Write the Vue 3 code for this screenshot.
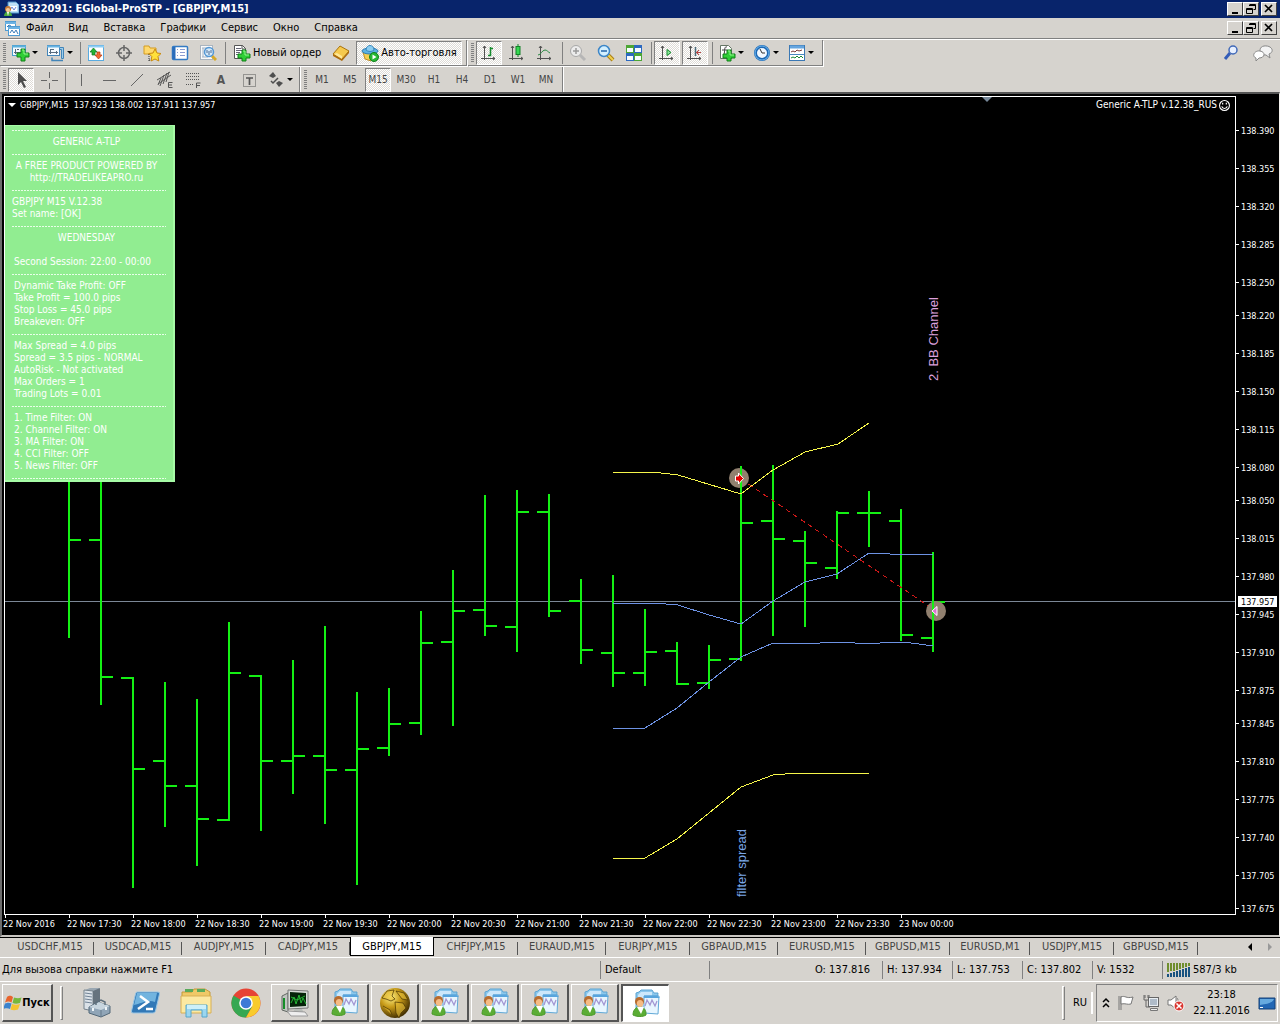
<script setup>
const icons = {
  app: '<path d="M5 1h8l3 3v8H5z" fill="#bfe0f6" stroke="#4a90c8"/><path d="M7 5h7v5H7z" fill="#fff"/><path d="M7 9l2-3 2 3 2-3" fill="none" stroke="#6a8ad8"/><path d="M1 15c0-6 8-6 8 0z" fill="#4aa83c"/><path d="M4 11l1 4 1-4z" fill="#fff"/><circle cx="5" cy="8" r="3" fill="#c87b38"/><circle cx="5" cy="9" r="2" fill="#f6c99a"/>',
  charts: '<rect x="1.500" y="1.500" width="10" height="9" fill="#fff" stroke="#4f9bd2"/><path d="M1 3h11" stroke="#6db2e2" stroke-width="2"/><rect x="4.500" y="6.500" width="11" height="9" fill="#fff" stroke="#4f9bd2"/><path d="M4 8h12" stroke="#6db2e2" stroke-width="2"/><path d="M6 13l2-3 2 3 2-3 2 4" fill="none" stroke="#3a7ab8"/><path d="M3 7l2-2 2 1" fill="none" stroke="#3a7ab8"/>',
  newChart: '<rect x=".5" y="1.500" width="13" height="10" fill="#f4faff" stroke="#4a9ccc"/><path d="M0 2.500h14" stroke="#5cb0dc" stroke-width="2"/><path d="M3.500 5v5M2 8.500h7M5 5.500h2" stroke="#55677a" fill="none"/><path d="M9 5h4v4h4v4h-4v4H9v-4H5V9h4z" fill="#2fce36" stroke="#118018"/><path d="M10 6h2v4h4" fill="none" stroke="#91f58b"/>',
  profiles: '<path d="M4.500 3.500h12v11h-2v-9h-10z" fill="#9ccdec" stroke="#4385b8"/><rect x=".5" y="1.500" width="12" height="10" fill="#f5fbff" stroke="#4385b8"/><path d="M0 2.500h13" stroke="#68b4e4" stroke-width="2"/><path d="M3.500 5v5M2 8.500h9M4 5.500h3M9.500 7v3" stroke="#596d80"/><path d="M5 13.500v3h11" fill="none" stroke="#4385b8" stroke-width="1.500"/>',
  market: '<rect x="1.500" y="1.500" width="15" height="15" fill="#fff" stroke="#5aabe0"/><path d="M1 2.500h16" stroke="#8ecdf4" stroke-width="2"/><path d="M6.500 4L10 8H8v3H5V8H3z" fill="#25b432" stroke="#137522" stroke-width=".7"/><path d="M11.500 15L8 11h2V8h3v3h2z" fill="#f4682f" stroke="#b53a10" stroke-width=".7"/>',
  target: '<circle cx="9" cy="9" r="5.500" fill="none" stroke="#666" stroke-width="1.500"/><path d="M9 1v6M9 11v6M1 9h6M11 9h6" stroke="#666" stroke-width="1.500"/>',
  favorites: '<path d="M1 2h5l1 2h6v6H1z" fill="#ffd96d" stroke="#d49c22"/><path d="M6 10v7M6 16h4" stroke="#333" stroke-dasharray="1 1"/><path d="M12 5l2 4 4 .5-3 3 .8 4.500L12 15l-4 2 .8-4.500-3-3 4.200-.5z" fill="#ffe03b" stroke="#c98a10"/>',
  data: '<rect x="1.500" y="2.500" width="15" height="13" rx="1" fill="#fff" stroke="#337ac4" stroke-width="1.500"/><path d="M3 3v12" stroke="#2a6dbb" stroke-width="3"/><path d="M6 5.500h1M9 5.500h5M6 8.500h1M9 8.500h5M6 11.500h1M9 11.500h5" stroke="#8b9bd0"/>',
  tester: '<rect x="1.500" y="1.500" width="12" height="14" fill="#fafafa" stroke="#aab4bf"/><path d="M3 4h8M3 13h6M4 4v9" stroke="#9fb0c4"/><path d="M13 12l4 4" stroke="#d7a928" stroke-width="3"/><circle cx="10" cy="8" r="4.500" fill="#cbe6fb" fill-opacity=".8" stroke="#5497d4" stroke-width="1.500"/><path d="M8 9V6M10 11V7M12 9V6" stroke="#4b6b96"/>',
  order: '<path d="M1.500 1.500h8l3 3v10h-11z" fill="#fff" stroke="#555"/><path d="M9 1v4h4" fill="none" stroke="#555"/><path d="M3 4.500h5M3 6.500h6M3 8.500h4M3 10.500h2" stroke="#667"/><path d="M9 6h4v4h4v4h-4v3H9v-3H5v-4h4z" fill="#2fce36" stroke="#118018"/><path d="M10 7h2v4h4" fill="none" stroke="#91f58b"/>',
  book: '<path d="M1 10l7-8 9 5-7 8z" fill="#f6c94d" stroke="#a8730e"/><path d="M1 10v2l9 5 7-8V7l-7 8z" fill="#ad6b0b"/><path d="M2 10l3-1 5 3v3z" fill="#ffe796"/>',
  auto: '<path d="M2 8l2 7 6 2 6-7z" fill="#f7cf4e" stroke="#bb8b24"/><ellipse cx="9" cy="7" rx="8" ry="3" fill="#5bb2e2" stroke="#2d7cb4"/><path d="M5 6c0-6 8-6 8 0-2 2-6 2-8 0z" fill="#8bcdf0" stroke="#3888bd"/><circle cx="13" cy="13" r="4.500" fill="#27b834" stroke="#12811f"/><path d="M11.500 10.500v5l4-2.500z" fill="#fff"/>',
  bars: '<path d="M4.500 2v14M1 14.500h14M3 4l1.500-2L6 4M13 13l2 1.500L13 16" fill="none" stroke="#505050"/><path d="M10.500 3v9M8 11.500h3M10 4.500h3" fill="none" stroke="#168a2d" stroke-width="1.500"/>',
  candles: '<path d="M4.500 2v14M1 14.500h14M3 4l1.500-2L6 4M13 13l2 1.500L13 16" fill="none" stroke="#505050"/><path d="M10 0v13" stroke="#168a2d"/><rect x="8" y="2.500" width="4" height="8" fill="#35d851" stroke="#128128"/>',
  line: '<path d="M4.500 2v14M1 14.500h14M3 4l1.500-2L6 4M13 13l2 1.500L13 16" fill="none" stroke="#505050"/><path d="M2 11c3 0 4-5 7-5 2 0 3 2 5 3" fill="none" stroke="#2a8a43"/>',
  zoomIn: '<path d="M11 11l5 5" stroke="#b6b6b6" stroke-width="3"/><circle cx="7" cy="7" r="5.500" fill="#ececec" stroke="#a8a8a8"/><path d="M4 7h6M7 4v6" stroke="#999" stroke-width="1.500"/>',
  zoomOut: '<path d="M11 11l5 5" stroke="#a97f18" stroke-width="4"/><path d="M11 11l5 5" stroke="#f1d04d" stroke-width="2"/><circle cx="7" cy="7" r="5.500" fill="#d2efff" stroke="#3c86c8" stroke-width="1.500"/><path d="M4 7h6" stroke="#2265aa" stroke-width="1.500"/>',
  tiles: '<path d="M1 1h8v8H1z" fill="#4ca635"/><path d="M9 1h8v8H9z" fill="#2c69c0"/><path d="M1 9h8v8H1z" fill="#2c69c0"/><path d="M9 9h8v8H9z" fill="#4ca635"/><path d="M2 4h6v4H2zM10 4h6v4h-6zM2 12h6v4H2zM10 12h6v4h-6z" fill="#f7fcff"/>',
  scroll: '<path d="M4.500 2v14M1 14.500h14M3 4l1.500-2L6 4M13 13l2 1.500L13 16" fill="none" stroke="#505050"/><path d="M9 5.500v6l4-3z" fill="#8be79a" stroke="#148c2e"/>',
  shift: '<path d="M4.500 2v14M1 14.500h14M3 4l1.500-2L6 4M13 13l2 1.500L13 16" fill="none" stroke="#505050"/><path d="M9.500 3v9" stroke="#4b6b7b" stroke-width="1.500"/><path d="M10 8.500h5M13 6l-2.500 2.500L13 11" stroke="#b84444" fill="none"/>',
  indicators: '<path d="M2.500 1.500h8l3 3v10h-11z" fill="#fff" stroke="#657565"/><path d="M9 3c-3-1-2 3-3 9M4 6h5" stroke="#444" fill="none"/><path d="M9 6h4v4h4v4h-4v3H9v-3H5v-4h4z" fill="#2fce36" stroke="#118018"/><path d="M10 7h2v4h4" fill="none" stroke="#91f58b"/>',
  clock: '<circle cx="9" cy="9" r="6.500" fill="#f2f8ff" stroke="#1e69b5" stroke-width="3"/><circle cx="9" cy="9" r="7" fill="none" stroke="#6cb5ef"/><path d="M7 5l2 4h3" fill="none" stroke="#333"/>',
  template: '<rect x="1.500" y="1.500" width="15" height="15" fill="#fff" stroke="#3b78b4"/><path d="M2 3h14" stroke="#65a5df" stroke-width="3"/><path d="M2 10.500h14" stroke="#4787c0"/><path d="M3 8l2-1 2 1 2-2 2 1 3-1" fill="none" stroke="#7b3b38"/><path d="M3 14l2-1 2 1 2-2 2 2 2-2 2 2" fill="none" stroke="#198c35"/>',
  cursor: '<path d="M6 1v13l3-3 3 6 2-1-3-6h4z" fill="#4c4c4c"/>',
  cross: '<path d="M9.500 1v6M9.500 12v6M1 9.500h6M12 9.500h6" stroke="#666"/>',
  vline: '<path d="M9.500 3v12" stroke="#666"/>',
  hline: '<path d="M3 9.500h13" stroke="#666"/>',
  trend: '<path d="M3 15L15 3" stroke="#666"/>',
  channel: '<path d="M2 13L15 4M1 9L14 1M4 15l4-11M7 13l4-11M10 11l3-10M2 14l3-7" stroke="#555" fill="none"/><path d="M16.500 11.500h-4v5h4M12 14h4" stroke="#555" fill="none"/>',
  fibo: '<path d="M2 2.500h14M2 5.500h14M2 8.500h14M2 13.500h8" stroke="#555" stroke-dasharray="1 1"/><path d="M12.500 17v-5h4M12 14.500h4" stroke="#555" fill="none"/>',
  label: '<path d="M3.500 3.500h12v12h-12z" fill="none" stroke="#555" stroke-dasharray="1 1"/><path d="M6 7h7M9.500 7v7" stroke="#555" stroke-width="1.700"/>',
  arrows: '<path d="M2 5l4-4 3 4-3 2zM9 12l3-2 4 2-4 4z" fill="#4e4e4e"/><path d="M4 10l2 2 5-5" stroke="#4e4e4e" stroke-width="1.500" fill="none"/>',
  find: '<path d="M7 9l-5 6" stroke="#335cb8" stroke-width="3"/><circle cx="10" cy="6" r="4" fill="#e8f0ff" stroke="#4169b8" stroke-width="1.500"/>',
  chat: '<path d="M13 11l4 3-1-4c6-2 3-9-5-8-6 1-5 9 2 9z" fill="#f4f4f4" stroke="#888"/><path d="M6 14l-3 3v-3c-5-2-1-8 4-7 6 1 5 7-1 7z" fill="#fff" stroke="#888"/>',
  min: '<path d="M3 9h6v2H3z" fill="#000"/>',
  restore: '<path d="M4.500 1.500h6v5h-2M4 2.500h7M1.500 5.500h6v5h-6zM1 6.500h7" fill="none" stroke="#000"/>',
  close: '<path d="M2 2l7 7M9 2L2 9" stroke="#000" stroke-width="1.700"/>',
  server: '<path d="M5 3l5-2h9v19l-6 4-8-3z" fill="#9aa7b2"/><path d="M4 3l9 1v20l-9-2z" fill="#dbe2e8" stroke="#75828c"/><path d="M13 4l7-3v20l-7 3z" fill="#66737e"/><path d="M5 6l7 1M5 9l7 1M5 12l7 1M5 15l7 1" stroke="#718396"/><path d="M9 20l9-5 12 4v7l-9 4-12-4z" fill="#90a5b7" stroke="#536878"/><path d="M9 20l12 3 9-4-11-4z" fill="#c7d5df"/><path d="M16 18v-3l5-2 4 2v3" fill="none" stroke="#5f707d" stroke-width="1.500"/><path d="M21 23v7" stroke="#667b8b"/><path d="M13 21v3M26 20v3" stroke="#eef4f8" stroke-width="2"/>',
  powershell: '<path d="M7 5h21q2 0 1.500 2l-4 17q-.5 2-2.500 2H3q-2 0-1.500-2l4-17q.5-2 1.500-2z" fill="#3279b7" stroke="#9ac7e5"/><path d="M7 6h20l-2 9C17 12 11 17 4 18z" fill="#72b4df"/><path d="M10 9l8 6-10 7M16 22h7" fill="none" stroke="#fff" stroke-width="2.500"/>',
  folder: '<path d="M2 5h10l2-3h11l5 3v20H2z" fill="#efc967" stroke="#c49a3b"/><path d="M5 5h8v-3H5zM17 5h8v-3h-8z" fill="#59aa59"/><path d="M1 9h30v17H1z" fill="#fce9a2" stroke="#d7af55"/><path d="M6 30V18h21v12h-5v-7H11v7z" fill="#9bd6ef" stroke="#54a6cc"/><path d="M7 18h19v4H7z" fill="#cdf0fa"/>',
  chrome: '<circle cx="16" cy="16" r="14.500" fill="#e64435"/><path d="M3.500 8.600A14.500 14.500 0 0 0 16 30.500l6.200-10.900L16 16z" fill="#36a852"/><path d="M28.600 9H16l6.200 10.600L16 30.500A14.500 14.500 0 0 0 28.600 9z" fill="#f9cb2d"/><circle cx="16" cy="16" r="6.800" fill="#fff"/><circle cx="16" cy="16" r="5.300" fill="#3d79d6"/>',
  monitor: '<path d="M3 9l6-3v19l-6-2z" fill="#bfc5bf" stroke="#626762"/><path d="M5 11v11" stroke="#158d28" stroke-width="2"/><path d="M9 3l20 1v17l-20 1z" fill="#d8ddd8" stroke="#777"/><path d="M11 5l16 1v13l-16 1z" fill="#052409"/><path d="M12 16l3-6 2 7 3-9 2 8 2-5 3 6M12 10l6 3 8-4" fill="none" stroke="#24b834"/><path d="M16 22h7l2 4H13z" fill="#b9bdb9"/><path d="M8 24l18 1 3 4H12z" fill="#eee" stroke="#999"/>',
  trader: '<path d="M6 5l3-1 2-2h11l2 3h4l-2 19-20-1z" fill="#8cc8ec" stroke="#5ca4d3"/><path d="M8 7l3-3h11v17H8z" fill="#cde8fa"/><path d="M14 8h15l-1 18-14-1z" fill="#e8f6ff" stroke="#61a9d7"/><path d="M14 7.500h13l3 2.500H14z" fill="#58a5dd"/><path d="M15 18l2-6 3 5 2-5 3 6 2-5" fill="none" stroke="#a497d3" stroke-width="1.300"/><path d="M3 27c0-11 14-11 13 0-3 2-9 2-13 0z" fill="#5bad35" stroke="#4a9a2a"/><path d="M7 19l4 7 3-7z" fill="#fff"/><circle cx="9.500" cy="13.500" r="4.500" fill="#b96b2c"/><ellipse cx="10" cy="15.500" rx="3.200" ry="3.500" fill="#f5bc85"/>',
  globe: '<defs><radialGradient id="gold" cx=".35" cy=".3" r=".75"><stop offset="0" stop-color="#fff38a"/><stop offset=".45" stop-color="#c79a18"/><stop offset="1" stop-color="#3c2900"/></radialGradient></defs><circle cx="16" cy="16" r="15" fill="url(#gold)"/><path d="M3 11l5-7 7-1-2 6 3 3-4 2-5-2zM17 4l8 2 4 7-6-1-3-4zM16 15l8 1 3 5-5 5-2 5-3-5zM4 19l7 4 2 5" fill="#e8c038" fill-opacity=".6" stroke="#4a3500" stroke-opacity=".7"/>',
  windows: '<path d="M3 3c3-2 4-1 6 0L7.500 8.500C5 7 4 7.500 1 8.500z" fill="#e8642c"/><path d="M10 3.500c3 1 5 1 7.500 0L16 9c-3 1-5 1-7.500 0z" fill="#76b83b"/><path d="M1 9.500c3-1 4-1 6.500 0L6 15c-2-1-4-1-7 0z" fill="#3b83cd"/><path d="M8 10c3 1 5 1 8 0l-2 5.500c-3 1-5 1-7.500 0z" fill="#f4c42f"/>',
  flag: '<path d="M2 2v14M4 2v14" stroke="#777"/><path d="M4 3c4-2 5 2 12 0l-2 7c-4 1-5-1-10 0z" fill="#fff" stroke="#777"/>',
  network: '<path d="M2 1v5h5V1M4 6v7h4M3 1v3M6 1v3" fill="none" stroke="#666"/><rect x="6.500" y="3.500" width="10" height="9" fill="#e8edf2" stroke="#666"/><path d="M8 5h7v6H8z" fill="#afbbc8"/><path d="M8.500 14.500h7v2h-7z" fill="#eee" stroke="#777"/>',
  sound: '<path d="M1 6h3l5-4v13l-5-4H1z" fill="#fff" stroke="#777"/><path d="M10 4c2 2 2 8 0 10" fill="none" stroke="#888"/><circle cx="12" cy="12" r="5" fill="#d93630" stroke="#fff"/><path d="M9.500 9.500l5 5M14.500 9.500l-5 5" stroke="#fff" stroke-width="1.500"/>',
  desktop: '<path d="M1 4h16v11H1z" fill="#2367b4" stroke="#164378"/><path d="M2 5h14c-2 4-6 5-14 6z" fill="#67aadf"/><path d="M2 13h3v1H2z" fill="#fff"/>',
  signal: '<path d="M1 0v9M4 0v8M7 0v8M10 0v7M13 0v6M16 0v5M19 0v4M22 0v3" stroke="#6f8e2d" stroke-width="2"/><path d="M1 11v3M4 10v4M7 9v5M10 8v6M13 7v7M16 6v8M19 5v9M22 4v10" stroke="#18527f" stroke-width="2"/>',
}

const menus = ['Файл', 'Вид', 'Вставка', 'Графики', 'Сервис', 'Окно', 'Справка']
const windowButtons = [['min', 'Свернуть'], ['restore', 'Восстановить'], ['close', 'Закрыть']]

const standardTools = [
  { icon: 'newChart', menu: true },
  { icon: 'profiles', menu: true },
  { sep: true },
  { icon: 'market' }, { icon: 'target' }, { icon: 'favorites' }, { icon: 'data' }, { icon: 'tester' },
  { sep: true },
  { icon: 'order', text: 'Новый ордер' },
  { icon: 'book' },
  { icon: 'auto', text: 'Авто-торговля', on: true },
]
const chartTools = [
  { icon: 'bars', on: true }, { icon: 'candles' }, { icon: 'line' },
  { sep: true },
  { icon: 'zoomIn' }, { icon: 'zoomOut' }, { icon: 'tiles' },
  { sep: true },
  { icon: 'scroll', on: true }, { icon: 'shift', on: true },
  { sep: true },
  { icon: 'indicators', menu: true }, { icon: 'clock', menu: true }, { icon: 'template', menu: true },
]
const drawTools = [
  { icon: 'cursor', on: true }, { icon: 'cross' },
  { sep: true },
  { icon: 'vline' }, { icon: 'hline' }, { icon: 'trend' }, { icon: 'channel' }, { icon: 'fibo' },
  { letter: 'A' }, { icon: 'label' }, { icon: 'arrows', menu: true },
]
const periods = ['M1', 'M5', 'M15', 'M30', 'H1', 'H4', 'D1', 'W1', 'MN']
const toolGroups = [standardTools, chartTools]

/* high, low, open, close of each bar, in canvas units */
const bars = [
  [400, 638, null, 540], [400, 705, 540, 677], [677, 888, 678, 769], [682, 827, 761, 786],
  [699, 866, 786, 819], [622, 821, 820, 673], [675, 831, 676, 761], [660, 794, 761, 756],
  [626, 824, 756, 770], [692, 885, 770, 749], [688, 756, 748, 724], [611, 735, 723, 643],
  [570, 726, 642, 611], [495, 636, 610, 626], [490, 652, 627, 512], [494, 617, 512, 611],
  [579, 664, 601, 650], [575, 687, 653, 673], [609, 686, 673, 652], [642, 685, 651, 684],
  [645, 689, 683, 660], [466, 661, 659, 523], [465, 636, 521, 539], [531, 627, 541, 563],
  [511, 579, 568, 513], [491, 547, 513, 513], [509, 641, 521, 635], [552, 652, 638, 602],
]
const barPath = bars.map(([h, l, o, c], i) => {
  const x = 69 + 32 * i
  return `M${x} ${h}V${l}M${x} ${c}h12` + (o ? `M${x} ${o}h-12` : '')
}).join('')

const prices = [
  ['138.390', 130], ['138.355', 168], ['138.320', 206], ['138.285', 244], ['138.250', 282],
  ['138.220', 315], ['138.185', 353], ['138.150', 391], ['138.115', 429], ['138.080', 467],
  ['138.050', 500], ['138.015', 538], ['137.980', 576], ['137.945', 614], ['137.910', 652],
  ['137.875', 690], ['137.845', 723], ['137.810', 761], ['137.775', 799], ['137.740', 837],
  ['137.705', 875], ['137.675', 908],
]
const times = ['22 Nov 2016', '22 Nov 17:30', '22 Nov 18:00', '22 Nov 18:30', '22 Nov 19:00', '22 Nov 19:30',
  '22 Nov 20:00', '22 Nov 20:30', '22 Nov 21:00', '22 Nov 21:30', '22 Nov 22:00', '22 Nov 22:30',
  '22 Nov 23:00', '22 Nov 23:30', '23 Nov 00:00']

const panel = [
  '-', ['GENERIC A-TLP', 'center'], '-', ['A FREE PRODUCT POWERED BY', 'center'], ['http://TRADELIKEAPRO.ru', 'center'],
  '-', ['GBPJPY M15 V.12.38', 'out'], ['Set name: [OK]', 'out'], '-', ['WEDNESDAY', 'center'], ['', ''],
  ['Second Session: 22:00 - 00:00', ''], '-', ['Dynamic Take Profit: OFF', ''], ['Take Profit = 100.0 pips', ''],
  ['Stop Loss = 45.0 pips', ''], ['Breakeven: OFF', ''], '-', ['Max Spread = 4.0 pips', ''],
  ['Spread = 3.5 pips - NORMAL', ''], ['AutoRisk - Not activated', ''], ['Max Orders = 1', ''],
  ['Trading Lots = 0.01', ''], '-', ['1. Time Filter: ON', ''], ['2. Channel Filter: ON', ''],
  ['3. MA Filter: ON', ''], ['4. CCI Filter: OFF', ''], ['5. News Filter: OFF', ''], '-',
]

const tabs = [
  ['USDCHF,M15', 'wide'], ['USDCAD,M15', 'wide'], ['AUDJPY,M15', ''], ['CADJPY,M15', ''], ['GBPJPY,M15', 'active'],
  ['CHFJPY,M15', ''], ['EURAUD,M15', 'wide'], ['EURJPY,M15', ''], ['GBPAUD,M15', 'wide'], ['EURUSD,M15', 'wide'],
  ['GBPUSD,M15', ''], ['EURUSD,M1', 'narrow'], ['USDJPY,M15', ''], ['GBPUSD,M15', ''],
]
const quotes = [['O: 137.816', 'open'], ['H: 137.934', ''], ['L: 137.753', ''], ['C: 137.802', ''], ['V: 1532', '']]
const launchers = ['server', 'powershell', 'folder', 'chrome']
const tasks = ['monitor', 'trader', 'globe', 'trader', 'trader', 'trader', 'trader', 'trader']
</script>

<template>
  <div class="screen">
    <header class="titlebar">
      <svg class="i16" viewBox="0 0 16 16" v-html="icons.app"></svg>
      <h1>3322091: EGlobal-ProSTP - [GBPJPY,M15]</h1>
      <div class="winbtns">
        <button v-for="b in windowButtons" :key="b[0]" :class="b[0]" :aria-label="b[1]">
          <svg viewBox="0 0 12 12" v-html="icons[b[0]]"></svg>
        </button>
      </div>
    </header>

    <nav class="menubar">
      <svg class="i16" viewBox="0 0 16 16" v-html="icons.charts"></svg>
      <button v-for="m in menus" :key="m" class="menu">{{ m }}</button>
      <div class="winbtns">
        <button v-for="b in windowButtons" :key="b[0]" :class="b[0]" :aria-label="b[1]">
          <svg viewBox="0 0 12 12" v-html="icons[b[0]]"></svg>
        </button>
      </div>
    </nav>

    <div class="toolrow">
      <div v-for="(g, gi) in toolGroups" :key="gi" class="group top">
        <span class="grip"></span>
        <template v-for="(t, i) in g" :key="i">
          <span v-if="t.sep" class="sep"></span>
          <button v-else class="tool" :class="{ on: t.on, drop: t.menu, texted: t.text }" :aria-label="t.text || t.icon">
            <svg class="i18" viewBox="0 0 18 18" v-html="icons[t.icon]"></svg>
            <span v-if="t.text">{{ t.text }}</span>
            <i v-if="t.menu" class="caret"></i>
          </button>
        </template>
      </div>
      <div class="corner">
        <button class="tool" aria-label="Поиск"><svg class="i18" viewBox="0 0 18 18" v-html="icons.find"></svg></button>
        <button class="tool" aria-label="Чат"><svg class="chat" viewBox="0 0 20 18" v-html="icons.chat"></svg></button>
      </div>
    </div>

    <div class="toolrow second">
      <div class="group draw">
        <span class="grip"></span>
        <template v-for="(t, i) in drawTools" :key="i">
          <span v-if="t.sep" class="sep"></span>
          <button v-else class="tool" :class="{ on: t.on, drop: t.menu }" :aria-label="t.icon || 'Текст'">
            <b v-if="t.letter">{{ t.letter }}</b>
            <svg v-else class="i18" viewBox="0 0 18 18" v-html="icons[t.icon]"></svg>
            <i v-if="t.menu" class="caret"></i>
          </button>
        </template>
      </div>
      <div class="group">
        <span class="grip"></span>
        <button v-for="p in periods" :key="p" class="tool period" :class="{ on: p === 'M15' }">{{ p }}</button>
      </div>
    </div>

    <main class="chart">
      <section class="plot">
        <svg class="canvas" aria-hidden="true">
          <g transform="translate(-5 -97)">
            <path d="M982 97h10l-5 5z" fill="#778899" />
            <path d="M5 601.500H4000" stroke="#7b8796" shape-rendering="crispEdges" />
            <path :d="barPath" fill="none" stroke="#14f014" stroke-width="2" />
            <g fill="none" stroke-width="1" shape-rendering="crispEdges">
              <g stroke="#f6f64a">
                <polyline points="613,472 653,472 678,475 741,494 773,470 805,452 838,444 869,423" />
                <polyline points="613,858 645,858 677,839 709,813 741,787 773,775 797,773 869,773" />
              </g>
              <g stroke="#6d92e4">
                <polyline points="613,603 653,603 678,605 709,615 741,624 773,601 805,582 837,574 869,553 885,553 890,554 933,554" />
                <polyline points="613,728 645,728 677,708 709,682 741,657 773,643 820,643 826,642 850,642 855,643 880,643 888,642 904,642 933,646" />
              </g>
              <path d="M741 479L933 609" stroke="#d01818" stroke-dasharray="5 4" />
            </g>
            <g>
              <circle cx="739" cy="478" r="10" fill="#91806f" />
              <path d="M741 468v20" stroke="#14f014" stroke-width="2" />
              <path d="M735.500 476h3v-3l5 5.500-5 5.500v-3h-3z" fill="#e00000" stroke="#fff" />
              <circle cx="936" cy="611" r="10" fill="#91806f" />
              <path d="M933 601v20" stroke="#14f014" stroke-width="2" />
              <path d="M932 611l5-4.500v9z" fill="#dd70d0" stroke="#fff" />
            </g>
            <g class="notes">
              <text transform="translate(938 381) rotate(-90)" fill="#dda0dd">2. BB Channel</text>
              <text transform="translate(746 897) rotate(-90)" fill="#7ba7e8">filter spread</text>
            </g>
          </g>
        </svg>
        <div class="caption">
          <p><i class="caret"></i><span>GBPJPY,M15&nbsp; 137.923 138.002 137.911 137.957</span></p>
          <p class="expert">
            <span>Generic A-TLP v.12.38_RUS</span>
            <svg class="smile" viewBox="0 0 12 12"><circle cx="6" cy="6" r="5.400" fill="none" stroke="#fff" stroke-width="1.200" /><path d="M4 3v2M8 3v2M3 7c1 3 5 3 6 0" fill="none" stroke="#fff" stroke-width="1.300" /></svg>
          </p>
        </div>
        <div class="panel">
          <template v-for="(l, i) in panel" :key="i">
            <div v-if="l === '-'" class="rule"></div>
            <p v-else :class="l[1]">{{ l[0] }}</p>
          </template>
        </div>
      </section>
      <svg class="prices">
        <g transform="translate(0 -96)">
          <template v-for="p in prices" :key="p[0]">
            <path :d="`M0 ${p[1]}.5h3`" stroke="#fff" />
            <text x="5" :y="p[1] + 4">{{ p[0] }}</text>
          </template>
          <path d="M2 596h39v11H2z" fill="#fff" />
          <text x="5" y="605" class="now">137.957</text>
        </g>
      </svg>
      <div class="times"><span v-for="t in times" :key="t">{{ t }}</span></div>
    </main>

    <nav class="tabs">
      <button v-for="(t, i) in tabs" :key="i" :class="t[1]">{{ t[0] }}</button>
      <div class="scrollers">
        <button aria-label="Назад" class="left"></button>
        <button aria-label="Вперёд" class="right"></button>
      </div>
    </nav>

    <footer class="status">
      <span class="help">Для вызова справки нажмите F1</span>
      <span class="profile">Default</span>
      <span v-for="q in quotes" :key="q[0]" :class="q[1]">{{ q[0] }}</span>
      <span class="net"><svg viewBox="0 0 23 14" v-html="icons.signal"></svg>587/3 kb</span>
    </footer>

    <div class="taskbar">
      <button class="start"><svg class="i18" viewBox="0 0 18 18" v-html="icons.windows"></svg>Пуск</button>
      <span class="ridge"></span>
      <button v-for="l in launchers" :key="l" class="launch" :aria-label="l"><svg viewBox="0 0 32 32" v-html="icons[l]"></svg></button>
      <button v-for="(t, i) in tasks" :key="i" class="task" :class="{ current: i === 7 }" :aria-label="t"><svg viewBox="0 0 32 32" v-html="icons[t]"></svg></button>
      <div class="right">
        <span class="ridge"></span>
        <button class="lang">RU</button>
        <span class="ridge thin"></span>
        <div class="tray">
          <button aria-label="Показать значки"><svg class="more" viewBox="0 0 8 12"><path d="M1 5l3-3 3 3M1 10l3-3 3 3" fill="none" stroke="#000" stroke-width="1.500" /></svg></button>
          <button v-for="n in ['flag', 'network', 'sound']" :key="n" :aria-label="n"><svg class="i18" viewBox="0 0 18 18" v-html="icons[n]"></svg></button>
          <time><span>23:18</span><span>22.11.2016</span></time>
          <button aria-label="Рабочий стол"><svg class="i18" viewBox="0 0 18 18" v-html="icons.desktop"></svg></button>
        </div>
      </div>
    </div>
  </div>
</template>

<style>
body {
  margin: 0;
  background: #d6d3ce;
}
</style>

<style scoped>
* {
  box-sizing: border-box;
}
.screen {
  display: flex;
  flex-direction: column;
  min-height: 100vh;
  background: #d6d3ce;
  color: #000;
  font: 11px/14px "DejaVu Sans Condensed", "DejaVu Sans", sans-serif;
}
button {
  margin: 0;
  padding: 0;
  border: 0;
  background: none;
  color: inherit;
  font: inherit;
  white-space: nowrap;
}
svg {
  display: block;
  flex: none;
}
p,
h1 {
  margin: 0;
}
.i16 {
  width: 16px;
  height: 16px;
}
.i18 {
  width: 18px;
  height: 18px;
}
.titlebar {
  display: flex;
  align-items: center;
  height: 18px;
  padding: 0 3px;
  background: #08246b;
  color: #fff;
}
h1 {
  margin-left: 1px;
  font-size: 11px;
  line-height: 14px;
}
.winbtns {
  display: flex;
  margin-left: auto;
}
.winbtns button {
  width: 16px;
  height: 14px;
  border: 1px solid;
  border-color: #fff #404040 #404040 #fff;
  background: #d6d3ce;
}
.winbtns .close {
  margin-left: 2px;
}
.winbtns svg {
  width: 12px;
  height: 12px;
  margin: auto;
}
.menubar {
  display: flex;
  align-items: center;
  height: 22px;
  padding: 0 3px 1px 4px;
  border-bottom: 1px solid #fff;
  box-shadow: inset 0 -1px #808080;
}
.menu {
  margin-right: 15px;
}
.menubar .i16 {
  margin-right: 6px;
}
.menubar .winbtns {
  margin-bottom: 1px;
}
.toolrow {
  display: flex;
  height: 27px;
}
.toolrow.second {
  height: 25px;
}
.group {
  display: flex;
  align-items: center;
  padding-right: 1px;
  border-right: 1px solid #808080;
  box-shadow: 1px 0 #fff;
}
.group.top {
  height: 26px;
  padding-right: 2px;
  border-bottom: 1px solid #808080;
  box-shadow: 1px 1px #fff;
}
.group + .group {
  margin-left: 1px;
}
.grip {
  width: 3px;
  height: 20px;
  margin: 0 2px 0 3px;
  background: repeating-linear-gradient(#808080 0 1px, #d6d3ce 1px 2px);
}
.sep {
  width: 1px;
  height: 22px;
  margin: 0 2px 0 1px;
  background: #808080;
}
.top .sep {
  margin: 0 2px;
}
.tool {
  display: flex;
  align-items: center;
  justify-content: center;
  width: 26px;
  height: 24px;
  margin-right: 2px;
  border: 1px solid transparent;
}
.tool.drop {
  width: 33px;
}
.draw .tool.drop {
  width: 32px;
}
.tool.texted {
  width: auto;
  padding: 0 4px;
  gap: 2px;
}
.tool.on {
  border-color: #808080 #fff #fff #808080;
  background: repeating-conic-gradient(#fff 0 25%, #dedbd6 0 50%) 0 0 / 2px 2px;
}
.tool b {
  color: #555;
  font-size: 12px;
}
.period {
  color: #444;
  font-size: 10px;
}
.caret {
  border: 3px solid transparent;
  border-top-color: currentColor;
  border-bottom-width: 0;
  margin-left: 2px;
}
.corner {
  display: flex;
  align-items: center;
  gap: 3px;
  margin-left: auto;
  padding: 0 2px 2px 0;
}
.chat {
  width: 22px;
  height: 18px;
}
.chart {
  flex: 1;
  display: grid;
  grid-template-columns: 1fr 43px;
  grid-template-rows: 1fr 20px;
  min-height: 845px;
  padding: 2px 0 0 3px;
  border: solid;
  border-width: 2px 1px 2px 2px;
  border-color: #555 #f4f2ee #c8c5c0 #6c6c6c;
  background: #000;
  color: #fff;
  font-size: 9px;
  line-height: 12px;
}
.plot {
  position: relative;
  overflow: hidden;
  margin-left: -1px;
  border: 1px solid #fff;
}
.canvas {
  position: absolute;
  inset: 0;
  width: 100%;
  height: 100%;
}
.notes {
  font: 13px "Liberation Sans", Arial, sans-serif;
}
.caption,
.caption p {
  position: relative;
  display: flex;
  align-items: center;
  justify-content: space-between;
}
.caption {
  height: 16px;
  padding: 0 5px 0 3px;
}
.caption p {
  gap: 4px;
}
.caption .expert {
  gap: 2px;
  font-size: 10px;
}
.caption .caret {
  border-width: 4px 4px 0;
  margin: 0;
}
.smile {
  width: 11px;
  height: 11px;
}
.panel {
  position: relative;
  width: 170px;
  margin-top: 12px;
  padding: 0 8px 0 9px;
  border: solid #a6fba6;
  border-width: 1px 2px 2px 0;
  background: #91ed91;
  font-size: 10px;
}
.panel p {
  height: 12px;
  white-space: nowrap;
}
.panel .center {
  margin: 0 2px 0 -4px;
  text-align: center;
}
.panel .out {
  margin-left: -2px;
}
.rule {
  height: 12px;
  margin: 0 -1px 0 -2px;
  background: repeating-linear-gradient(90deg, #e8ffe8 0 2px, transparent 2px 3px) 0 6px / 100% 1px no-repeat;
}
.rule:first-child {
  height: 10px;
  background-position: 0 4px;
}
.rule:last-child {
  height: 8px;
}
.prices {
  width: 43px;
  height: 100%;
  fill: #fff;
}
.prices .now {
  fill: #000;
}
.times {
  grid-column: 1 / -1;
  display: flex;
  margin-left: -2px;
}
.times span {
  flex: none;
  width: 64px;
  padding-top: 3px;
  background: linear-gradient(#fff, #fff) 2px 0 / 1px 3px no-repeat;
  white-space: nowrap;
}
.tabs {
  display: flex;
  height: 21px;
  padding-left: 6px;
  border-top: 1px solid #000;
  border-bottom: 1px solid #fff;
  color: #444;
}
.tabs > button {
  position: relative;
  width: 84px;
  height: 17px;
  background: linear-gradient(#555, #555) 100% 4px / 1px 13px no-repeat;
}
.tabs > .wide {
  width: 88px;
}
.tabs > .narrow {
  width: 80px;
}
.tabs > .active {
  height: 19px;
  margin-top: -1px;
  padding-top: 1px;
  border: solid #000;
  border-width: 0 1px 1px;
  background: #fff;
  color: #000;
}
.scrollers {
  display: flex;
  align-items: center;
  gap: 16px;
  margin: 0 8px 2px auto;
}
.scrollers button {
  border: 4px solid transparent;
}
.scrollers .left {
  border-right-color: #000;
  border-left: 0;
}
.scrollers .right {
  border-left-color: #999;
  border-right: 0;
}
.status {
  display: flex;
  align-items: center;
  height: 24px;
  border-bottom: 1px solid #fff;
}
.status span {
  width: 70px;
  height: 18px;
  padding-left: 4px;
  border-left: 1px solid #808080;
  line-height: 18px;
  white-space: nowrap;
}
.status .help {
  flex: 1;
  padding-left: 2px;
  border: 0;
}
.status .profile {
  width: 109px;
}
.status .open {
  width: 173px;
  padding-left: 105px;
}
.status .net {
  display: flex;
  align-items: center;
  gap: 3px;
  width: 118px;
}
.net svg {
  width: 23px;
  height: 14px;
}
.taskbar {
  display: flex;
  align-items: center;
  height: 42px;
  padding: 0 2px;
}
.start,
.task {
  display: flex;
  align-items: center;
  justify-content: center;
  height: 38px;
  border: solid;
  border-width: 1px 2px 2px 1px;
  border-color: #fff #555 #555 #fff;
}
.start {
  width: 51px;
  font-weight: bold;
}
.ridge {
  width: 3px;
  height: 34px;
  margin: 0 8px 0 7px;
  border: 1px solid;
  border-color: #fff #808080 #808080 #fff;
}
.ridge.thin {
  width: 2px;
  height: 22px;
  margin: 0 3px 0 4px;
  border-width: 0 1px;
  border-color: #808080 #fff;
}
.launch {
  display: flex;
  justify-content: center;
  width: 50px;
}
.launch svg,
.task svg {
  width: 32px;
  height: 32px;
}
.task {
  width: 48px;
  margin-right: 2px;
}
.task.current {
  border-width: 2px 1px 1px 2px;
  border-color: #555 #fff #fff #555;
  background: #fff;
}
.right {
  display: flex;
  align-items: center;
  margin-left: auto;
}
.tray {
  display: flex;
  align-items: center;
  gap: 7px;
  width: 182px;
  height: 38px;
  padding: 0 1px 0 5px;
  border: 1px solid;
  border-color: #808080 #fff #fff #808080;
}
.more {
  width: 8px;
  height: 12px;
}
.tray time {
  display: flex;
  flex: 1;
  flex-direction: column;
  align-items: center;
  line-height: 16px;
}
</style>
